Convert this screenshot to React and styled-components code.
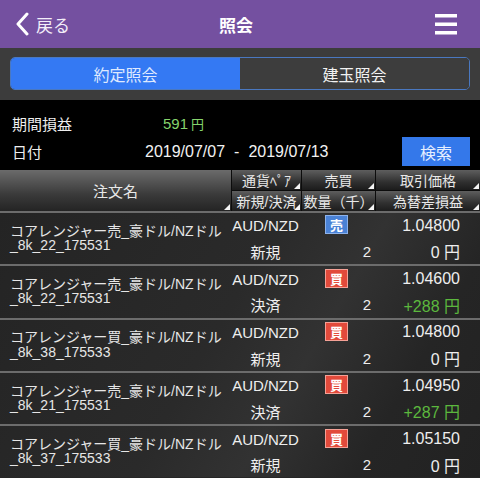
import React from "react";
import styled, { createGlobalStyle } from "styled-components";

const GlobalStyle = createGlobalStyle`
  body {
    margin: 0;
    background: #262626;
    font-family: "Liberation Sans", "Noto Sans CJK JP", sans-serif;
    color: #eee;
  }
`;

const NavBar = styled.div`
  height: 48px;
  background: #7450a0;
  display: grid;
  grid-template-columns: 1fr auto 1fr;
  align-items: center;
  padding: 0 23px 0 15px;
`;

const Back = styled.div`
  display: flex;
  align-items: center;
  gap: 7px;
  font-size: 17px;
  color: #f3eef9;
`;

const Title = styled.div`
  font-size: 17px;
  font-weight: bold;
  color: #fff;
`;

const Menu = styled.div`
  justify-self: end;
  display: flex;
`;

const TabBar = styled.div`
  height: 52px;
  box-sizing: border-box;
  background: #3c3c3c;
  padding: 9px 10px 10px;
`;

const Tabs = styled.div`
  display: flex;
  height: 100%;
  border: 1px solid #4a78c0;
  border-radius: 5px;
  overflow: hidden;
  box-sizing: border-box;
`;

const Tab = styled.div`
  flex: 1;
  display: flex;
  align-items: center;
  justify-content: center;
  font-size: 16px;
  background: ${(p) => (p.active ? "#3479f3" : "#3d3d3d")};
  color: ${(p) => (p.active ? "#dfe9ff" : "#f2f2f2")};
`;

const Summary = styled.div`
  background: #000;
  height: 70px;
  box-sizing: border-box;
  padding: 10px 10px 3px 12px;
  display: grid;
  grid-template-rows: 26px 31px;
`;

const SummaryRow = styled.div`
  display: flex;
  align-items: center;
`;

const Label = styled.div`
  width: ${(p) => p.w}px;
  font-size: 15px;
  color: #eee;
`;

const Profit = styled.div`
  color: #86d46c;
  font-size: 15px;
  span {
    font-size: 13px;
    margin-left: 3px;
  }
`;

const Dates = styled.div`
  flex: 1;
  display: flex;
  gap: 9px;
  font-size: 16px;
  color: #f2f2f2;
`;

const SearchButton = styled.div`
  width: 68px;
  height: 29px;
  background: #3478ea;
  color: #e6efff;
  font-size: 16px;
  display: flex;
  align-items: center;
  justify-content: center;
`;

const HeadGrid = styled.div`
  display: grid;
  grid-template-columns: 231px 69px 73px 1fr;
  grid-template-rows: 20px 20px;
  gap: 1px;
  background: #0c0c0c;
`;

const HeadCell = styled.div`
  position: relative;
  display: flex;
  align-items: center;
  justify-content: center;
  font-size: ${(p) => (p.big ? 15 : 14)}px;
  color: #e8e8e8;
  white-space: nowrap;
  grid-row: ${(p) => (p.big ? "1 / span 2" : "auto")};
  background: ${(p) =>
    p.big
      ? "linear-gradient(#6b6b6b, #3a3a3a 60%, #242424)"
      : "linear-gradient(#5e5e5e, #303030 60%, #1c1c1c)"};
  &::after {
    content: "";
    position: absolute;
    right: 1px;
    bottom: 1px;
    border-left: 6px solid transparent;
    border-bottom: 6px solid #f4f4f4;
  }
`;

const List = styled.div`
  background: linear-gradient(120deg, #242424 0%, #2a2a2a 45%, #323232 62%, #252525 80%, #222 100%);
`;

const Row = styled.div`
  display: grid;
  grid-template-columns: 231px 69px 73px 1fr;
  grid-template-rows: 1fr 1fr;
  height: 51.3px;
  border-top: 2px solid #6c6c6c;
`;

const Name = styled.div`
  grid-row: 1 / span 2;
  align-self: center;
  padding: 0 0 0 10px;
  font-size: 14px;
  line-height: 14.5px;
  color: #e6e6e6;
  margin-top: -1px;
`;

const Cell = styled.div`
  display: flex;
  align-items: center;
  justify-content: ${(p) => p.align || "center"};
  padding-right: ${(p) => p.pr || 0}px;
  font-size: ${(p) => p.size || 15}px;
  color: ${(p) => p.color || "#eee"};
  white-space: nowrap;
`;

const Badge = styled.div`
  width: 21px;
  height: 17px;
  display: flex;
  align-items: center;
  justify-content: center;
  font-size: 13px;
  font-weight: bold;
  color: #fff;
  background: ${(p) => (p.sell ? "#4a82d6" : "#e24a3b")};
  border: 1px solid ${(p) => (p.sell ? "#8db2ea" : "#f4a196")};
  margin-top: -2px;
`;

const orders = [
  { name: "コアレンジャー売_豪ドル/NZドル", id: "_8k_22_175531", side: "売", kind: "新規", price: "1.04800", pl: "0 円" },
  { name: "コアレンジャー売_豪ドル/NZドル", id: "_8k_22_175531", side: "買", kind: "決済", price: "1.04600", pl: "+288 円", gain: true },
  { name: "コアレンジャー買_豪ドル/NZドル", id: "_8k_38_175533", side: "買", kind: "新規", price: "1.04800", pl: "0 円" },
  { name: "コアレンジャー売_豪ドル/NZドル", id: "_8k_21_175531", side: "買", kind: "決済", price: "1.04950", pl: "+287 円", gain: true },
  { name: "コアレンジャー買_豪ドル/NZドル", id: "_8k_37_175533", side: "買", kind: "新規", price: "1.05150", pl: "0 円" },
];

export default function App() {
  return (
    <>
      <GlobalStyle />
      <NavBar>
        <Back>
          <svg width="14" height="24" viewBox="0 0 14 24">
            <polyline points="12,2 3,12 12,22" fill="none" stroke="#fff" strokeWidth="3" strokeLinecap="round" strokeLinejoin="round" />
          </svg>
          戻る
        </Back>
        <Title>照会</Title>
        <Menu>
          <svg width="22" height="21" viewBox="0 0 22 21">
            <rect x="0" y="0" width="22" height="3.5" fill="#fff" />
            <rect x="0" y="8.5" width="22" height="3.5" fill="#fff" />
            <rect x="0" y="17" width="22" height="3.5" fill="#fff" />
          </svg>
        </Menu>
      </NavBar>

      <TabBar>
        <Tabs>
          <Tab active>約定照会</Tab>
          <Tab>建玉照会</Tab>
        </Tabs>
      </TabBar>

      <Summary>
        <SummaryRow>
          <Label w={151}>期間損益</Label>
          <Profit>
            591<span>円</span>
          </Profit>
        </SummaryRow>
        <SummaryRow>
          <Label w={133}>日付</Label>
          <Dates>
            <span>2019/07/07</span>
            <span>-</span>
            <span>2019/07/13</span>
          </Dates>
          <SearchButton>検索</SearchButton>
        </SummaryRow>
      </Summary>

      <HeadGrid>
        <HeadCell big>注文名</HeadCell>
        <HeadCell>通貨ﾍﾟｱ</HeadCell>
        <HeadCell>売買</HeadCell>
        <HeadCell>取引価格</HeadCell>
        <HeadCell>新規/決済</HeadCell>
        <HeadCell>数量（千）</HeadCell>
        <HeadCell>為替差損益</HeadCell>
      </HeadGrid>

      <List>
        {orders.map((o, i) => (
          <Row key={i}>
            <Name>
              {o.name}
              <br />
              {o.id}
            </Name>
            <Cell size={15}>AUD/NZD</Cell>
            <Cell>
              <Badge sell={o.side === "売"}>{o.side}</Badge>
            </Cell>
            <Cell align="flex-end" pr={20} size={16}>
              {o.price}
            </Cell>
            <Cell size={15}>{o.kind}</Cell>
            <Cell align="flex-end" pr={2} size={15}>
              2
            </Cell>
            <Cell align="flex-end" pr={20} size={16} color={o.gain ? "#5cb83e" : "#eee"}>
              {o.pl}
            </Cell>
          </Row>
        ))}
      </List>
    </>
  );
}
